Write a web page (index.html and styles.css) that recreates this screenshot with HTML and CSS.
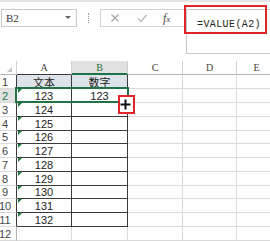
FILE: index.html
```html
<!DOCTYPE html>
<html>
<head>
<meta charset="utf-8">
<link rel="stylesheet" href="styles.css">
</head>
<body>
<div class="topline"></div>
<div class="fbar">
  <div class="namebox"><span class="nb-text">B2</span><span class="nb-arrow"></span></div>
  <div class="sep"></div>
  <div class="fxbox">
    <svg class="ico ico-x" width="10" height="10" viewBox="0 0 10 10"><path d="M1.5 1.5 L8.5 8.5 M8.5 1.5 L1.5 8.5" stroke="#a6a6a6" stroke-width="1.2" fill="none"/></svg>
    <svg class="ico ico-ok" width="10" height="10" viewBox="0 0 10 10"><path d="M1 5.5 L4 8.5 L9.5 2" stroke="#b8b8b8" stroke-width="1.2" fill="none"/></svg>
    <span class="fx"><i>f</i><span class="fx-x">x</span></span>
  </div>
  <div class="formula">
    <span class="ftext">=VALUE(A2)</span>
    <div class="redbox"></div>
  </div>
</div>
<div class="grid">
  <div class="h corner"><span class="tri"></span></div><div class="h hA">A</div><div class="h hB sel">B</div><div class="h">C</div><div class="h">D</div><div class="h">E</div>

  <div class="rh rt">1</div><div class="c t f1 cjk">文本</div><div class="c t f1 cjk">数字</div><div class="c"></div><div class="c"></div><div class="c"></div>
  <div class="rh rt rsel">2</div><div class="c t g">123</div><div class="c t b2">123<span class="selbox"></span><span class="redcur"><svg width="11" height="11" viewBox="0 0 11 11"><path d="M5.5 0.5 V10.5 M0.5 5.5 H10.5" stroke="#111" stroke-width="2"/></svg></span></div><div class="c"></div><div class="c"></div><div class="c"></div>
  <div class="rh rt">3</div><div class="c t g">124</div><div class="c t"></div><div class="c"></div><div class="c"></div><div class="c"></div>
  <div class="rh rt">4</div><div class="c t g">125</div><div class="c t"></div><div class="c"></div><div class="c"></div><div class="c"></div>
  <div class="rh rt">5</div><div class="c t g">126</div><div class="c t"></div><div class="c"></div><div class="c"></div><div class="c"></div>
  <div class="rh rt">6</div><div class="c t g">127</div><div class="c t"></div><div class="c"></div><div class="c"></div><div class="c"></div>
  <div class="rh rt">7</div><div class="c t g">128</div><div class="c t"></div><div class="c"></div><div class="c"></div><div class="c"></div>
  <div class="rh rt">8</div><div class="c t g">129</div><div class="c t"></div><div class="c"></div><div class="c"></div><div class="c"></div>
  <div class="rh rt">9</div><div class="c t g">130</div><div class="c t"></div><div class="c"></div><div class="c"></div><div class="c"></div>
  <div class="rh rt">10</div><div class="c t g">131</div><div class="c t"></div><div class="c"></div><div class="c"></div><div class="c"></div>
  <div class="rh rt">11</div><div class="c t g">132</div><div class="c t"></div><div class="c"></div><div class="c"></div><div class="c"></div>
  <div class="rh">12</div><div class="c"></div><div class="c"></div><div class="c"></div><div class="c"></div><div class="c"></div>
</div>
</body>
</html>
```
FILE: styles.css
```css
html, body {
  margin: 0;
  padding: 0;
  background: #fff;
}
body {
  width: 270px;
  height: 241px;
  overflow: hidden;
  font-family: "Liberation Sans", Arial, sans-serif;
}
.topline {
  height: 2px;
  background: #e4e4e4;
}
.fbar {
  display: flex;
  align-items: flex-start;
  height: 59px;
  padding-top: 7px;
  box-sizing: border-box;
}
.namebox {
  margin-left: 1px;
  width: 76px;
  height: 18px;
  box-sizing: border-box;
  border: 1px solid #c8c8c8;
  display: flex;
  align-items: center;
  justify-content: space-between;
  padding: 0 5px 0 4px;
}
.nb-text {
  font-family: "Liberation Serif", serif;
  font-size: 11px;
  color: #333;
}
.nb-arrow {
  width: 0;
  height: 0;
  border-left: 3px solid transparent;
  border-right: 3px solid transparent;
  border-top: 3px solid #666;
  margin-top: -2px;
}
.sep {
  margin-left: 11px;
  margin-top: 4px;
  width: 0;
  height: 10px;
  border-left: 1px dotted #9a9a9a;
}
.fxbox {
  margin-left: 11px;
  width: 86px;
  height: 18px;
  box-sizing: border-box;
  border: 1px solid #d2d2d2;
  border-right: none;
  display: flex;
  align-items: center;
  padding-left: 9px;
}
.ico-ok {
  margin-left: 17px;
}
.fx {
  margin-left: 16px;
  font-family: "Liberation Serif", serif;
  font-size: 12px;
  color: #444;
  line-height: 1;
}
.fx-x {
  font-style: italic;
  font-size: 9px;
}
.formula {
  position: relative;
  width: 84px;
  height: 45px;
  box-sizing: border-box;
  border: 1px solid #c8c8c8;
  border-right: none;
  padding: 3px 0 0 10px;
}
.ftext {
  font-family: "Liberation Mono", monospace;
  font-size: 10px;
  line-height: 12px;
  letter-spacing: 0.4px;
  color: #222;
}
.redbox {
  position: absolute;
  left: -3px;
  top: -5px;
  width: 83px;
  height: 29px;
  box-sizing: border-box;
  border: 2px solid #e0242c;
}
.grid {
  display: grid;
  grid-template-columns: 17px 55px 56px 55px 54px 40px;
  grid-template-rows: 14px 14px 14px 14px 14px 13px 14px 14px 14px 13px 14px 14px 14px;
}
.grid > div {
  box-sizing: border-box;
  border-right: 1px solid #dadada;
  border-bottom: 1px solid #dadada;
  display: flex;
  align-items: center;
  justify-content: center;
  font-size: 11px;
  color: #222;
  position: relative;
}
.grid > .h {
  font-family: "Liberation Serif", serif;
  font-size: 10px;
  color: #444;
  border-right-color: #d0d0d0;
  border-bottom-color: #b5b5b5;
}
.grid > .hA {
  border-bottom-color: #3a3a3a;
}
.grid > .h.sel {
  background: #e1e1e1;
  color: #217346;
  border-bottom: 2px solid #217346;
}
.corner .tri {
  position: absolute;
  right: 4px;
  bottom: 2px;
  width: 0;
  height: 0;
  border-left: 5px solid transparent;
  border-bottom: 5px solid #c6c6c6;
}
.grid > .rh {
  justify-content: center;
  padding-right: 6px;
  color: #444;
  font-size: 11px;
  border-right-color: #b5b5b5;
  border-bottom-color: #dadada;
}
.grid > .rh.rt {
  border-right-color: #3a3a3a;
}
.grid > .rh.rsel {
  background: #e1e1e1;
  color: #217346;
}
.grid > .t {
  border-right-color: #3a3a3a;
  border-bottom-color: #3a3a3a;
}
.grid > .f1 {
  background: #dce3eb;
}
.cjk {
  font-family: "Noto Sans CJK SC", sans-serif;
  font-size: 12px;
}
.g::before {
  content: "";
  position: absolute;
  left: 1px;
  top: 0;
  width: 0;
  height: 0;
  border-top: 4px solid #1f7a3a;
  border-right: 4px solid transparent;
}
.b2 {
  z-index: 2;
}
.selbox {
  position: absolute;
  left: -57px;
  top: -2px;
  right: -2px;
  bottom: -1px;
  border: 2px solid #217346;
}
.redcur {
  position: absolute;
  left: 46px;
  top: 6px;
  width: 17px;
  height: 19px;
  box-sizing: border-box;
  border: 2px solid #e0242c;
  background: #fff;
  display: flex;
  align-items: center;
  justify-content: center;
}
.redcur svg {
  display: block;
  margin-left: -3px;
  margin-top: -1px;
}
```
